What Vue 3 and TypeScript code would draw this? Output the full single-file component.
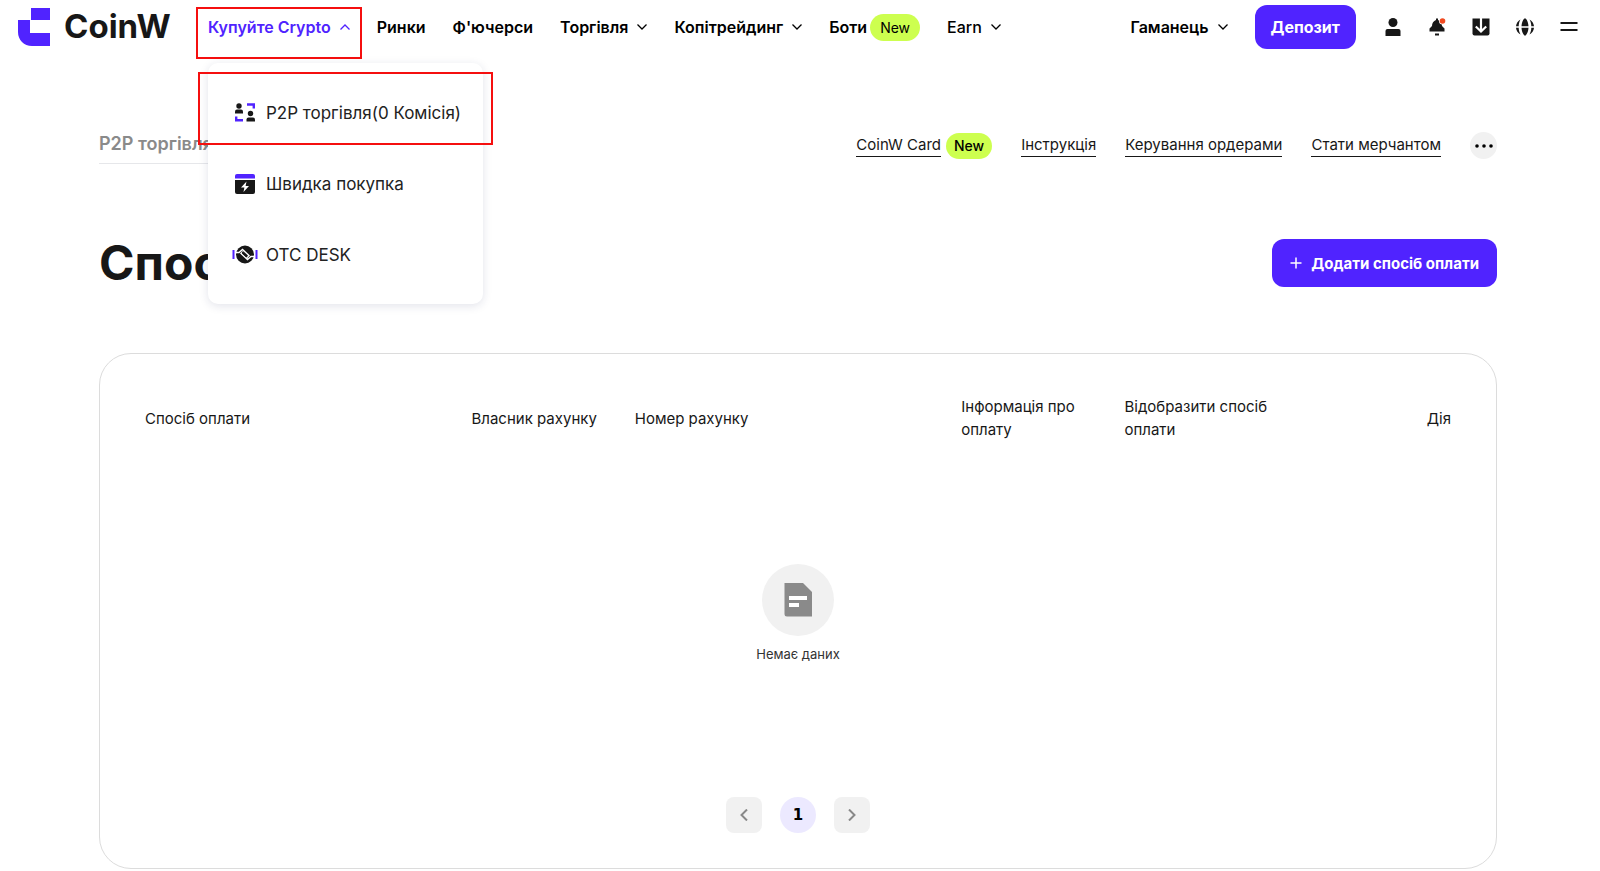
<script setup lang="ts">
interface NavItem {
  label: string
  arrow?: boolean
  badge?: string
  light?: boolean
}

const navItems: NavItem[] = [
  { label: 'Ринки' },
  { label: "Ф'ючерси" },
  { label: 'Торгівля', arrow: true },
  { label: 'Копітрейдинг', arrow: true },
  { label: 'Боти', badge: 'New' },
  { label: 'Earn', arrow: true, light: true },
]

const columns: string[] = [
  'Спосіб оплати',
  'Власник рахунку',
  'Номер рахунку',
  'Інформація про оплату',
  'Відобразити спосіб оплати',
  'Дія',
]
</script>

<template>
  <div class="page">
    <header class="header">
      <a class="logo" href="#">
        <svg class="logo-mark" viewBox="0 0 32 38" aria-hidden="true">
          <path d="M13 0H32V12H13Z" fill="#5023ff" />
          <path d="M0 12H12V25H32V38H14C6 38 0 32 0 24Z" fill="#5023ff" />
        </svg>
        <span>CoinW</span>
      </a>
      <nav class="nav">
        <div class="buy">
          <button class="nav-link active" type="button" aria-expanded="true">
            Купуйте Crypto
            <svg class="chevron" viewBox="0 0 10 6"><path d="M0.5 5.5 5 1 9.5 5.5" /></svg>
          </button>
          <div class="frame frame-nav"></div>
          <div class="menu">
            <a class="menu-item" href="#">
              <svg class="menu-icon" viewBox="0 0 26 22">
                <g fill="#171717">
                  <circle cx="7" cy="4" r="2.7" />
                  <path d="M3 11.500V9.500Q3 7.500 5 7.500H9Q11 7.500 11 9.500V11.500Z" />
                  <circle cx="18.500" cy="11.500" r="2.700" />
                  <path d="M14.500 19.500V17.500Q14.500 15.500 16.500 15.500H21Q23 15.500 23 17.500V19.500Z" />
                </g>
                <path d="M15 2.500H21.800V6.500M4.200 14.500V18.300H11" fill="none" stroke="#5023ff" stroke-width="2.400" />
              </svg>
              <span>P2P торгівля(0 Комісія)</span>
            </a>
            <a class="menu-item" href="#">
              <svg class="menu-icon" viewBox="0 0 26 22">
                <path d="M3 5.500V3Q3 1 5 1H21Q23 1 23 3V5.500Z" fill="#5023ff" />
                <path d="M3 7H23V19Q23 21 21 21H5Q3 21 3 19Z" fill="#171717" />
                <path d="M14.500 8.500 9 14.500H12.400L11.500 19 17 13H13.600Z" fill="#fff" />
              </svg>
              <span>Швидка покупка</span>
            </a>
            <a class="menu-item" href="#">
              <svg class="menu-icon" viewBox="0 0 26 22">
                <path d="M1.500 6V15M24.500 6V15" stroke="#5023ff" stroke-width="2" />
                <circle cx="13" cy="10.500" r="9" fill="#171717" />
                <path d="M4 8.500H7L10.500 5.500 17 11.500 14.500 14M22 12.500H19L15.500 15.500 9 9.500 11 7.500" fill="none" stroke="#fff" stroke-width="1.400" />
                <path d="M10.500 7.500 15.500 12.500 14.500 13.500 9.800 9Z" fill="#171717" />
              </svg>
              <span>OTC DESK</span>
            </a>
            <div class="frame frame-menu"></div>
          </div>
        </div>
        <a
          v-for="item in navItems"
          :key="item.label"
          class="nav-link"
          :class="{ light: item.light, badged: item.badge }"
          href="#"
        >
          {{ item.label }}
          <svg v-if="item.arrow" class="chevron" viewBox="0 0 10 6"><path d="M0.5 0.500 5 5 9.500 0.500" /></svg>
          <span v-if="item.badge" class="badge">{{ item.badge }}</span>
        </a>
      </nav>
      <div class="tools">
        <a class="nav-link" href="#">
          Гаманець
          <svg class="chevron" viewBox="0 0 10 6"><path d="M0.5 0.500 5 5 9.500 0.500" /></svg>
        </a>
        <button class="deposit" type="button">Депозит</button>
        <div class="icons">
          <button type="button" aria-label="Профіль">
            <svg viewBox="0 0 20 20" fill="#171717">
              <circle cx="10" cy="5.500" r="4.500" />
              <path d="M2.500 19V14Q2.500 12 4.500 12H15.500Q17.500 12 17.500 14V19Z" />
            </svg>
          </button>
          <button type="button" aria-label="Сповіщення">
            <svg viewBox="0 0 20 20" fill="#171717">
              <path d="M9 1.500H11V3C13.500 4 15 6 15 9L17.500 11.500V14.500H2.500V11.500L5 9C5 6 6.500 4 9 3Z" />
              <path d="M8 16.500H12V18.500H8Z" />
              <circle cx="15.500" cy="4" r="3.500" fill="#fff" />
              <circle cx="15.500" cy="4" r="2.800" fill="#f04a20" />
            </svg>
          </button>
          <button type="button" aria-label="Завантажити">
            <svg viewBox="0 0 20 20">
              <path d="M1.500 1.500H18.500V16.500Q18.500 18.500 16.500 18.500H3.500Q1.500 18.500 1.500 16.500Z" fill="#171717" />
              <path d="M10 0V14.500M4.800 9.500 10 14.500 15.200 9.500" fill="none" stroke="#fff" stroke-width="2.200" />
            </svg>
          </button>
          <button type="button" aria-label="Мова">
            <svg viewBox="0 0 20 20" fill="#171717">
              <path d="M9.300 1.500H10.700C12.500 3.500 13.300 6 13.500 9.200H6.500C6.700 6 7.500 3.500 9.300 1.500ZM6.500 10.800H13.500C13.300 14 12.500 16.500 10.700 18.500H9.300C7.500 16.500 6.700 14 6.500 10.800Z" />
              <path d="M5.500 2.500C4.300 4.500 3.700 7 3.700 9.200H1C1.200 6.400 3 3.800 5.500 2.500ZM14.500 2.500C15.700 4.500 16.300 7 16.300 9.200H19C18.800 6.400 17 3.800 14.500 2.500ZM5.500 17.500C4.300 15.500 3.700 13 3.700 10.800H1C1.200 13.600 3 16.200 5.500 17.500ZM14.500 17.500C15.700 15.500 16.300 13 16.300 10.800H19C18.800 13.600 17 16.200 14.500 17.500Z" />
            </svg>
          </button>
          <button type="button" aria-label="Меню">
            <svg viewBox="0 0 20 20"><path d="M1.500 6H18.500M1.500 13H18.500" stroke="#171717" stroke-width="2" /></svg>
          </button>
        </div>
      </div>
    </header>

    <main class="content">
      <div class="subbar">
        <a class="crumb" href="#">P2P торгівля</a>
        <div class="links">
          <span class="card-link"><a href="#">CoinW Card</a><span class="badge small">New</span></span>
          <a href="#">Інструкція</a>
          <a href="#">Керування ордерами</a>
          <a href="#">Стати мерчантом</a>
          <button class="more" type="button" aria-label="Більше">
            <svg viewBox="0 0 18 4"><circle cx="2" cy="2" r="1.800" /><circle cx="9" cy="2" r="1.800" /><circle cx="16" cy="2" r="1.800" /></svg>
          </button>
        </div>
      </div>

      <div class="title-row">
        <h1>Спосіб оплати</h1>
        <button class="add" type="button">
          <svg viewBox="0 0 12 12"><path d="M6 0.500V11.500M0.500 6H11.500" stroke="#fff" stroke-width="1.500" /></svg>
          Додати спосіб оплати
        </button>
      </div>

      <section class="card">
        <table>
          <thead>
            <tr>
              <th v-for="column in columns" :key="column" scope="col">{{ column }}</th>
            </tr>
          </thead>
          <tbody>
            <tr>
              <td colspan="6">
                <div class="empty">
                  <svg viewBox="0 0 72 72">
                    <circle cx="36" cy="36" r="36" fill="#f1f1f1" />
                    <path d="M22.500 19H41L50 28V52.500H25Q22.500 52.500 22.500 50Z" fill="#8a8a8a" />
                    <path d="M27 32H45V36H27ZM27 39H37V43H27Z" fill="#fff" />
                  </svg>
                  <span>Немає даних</span>
                </div>
              </td>
            </tr>
          </tbody>
        </table>
        <div class="pager">
          <button type="button" aria-label="Попередня сторінка">
            <svg viewBox="0 0 8 12"><path d="M7 0.500 1.500 6 7 11.500" /></svg>
          </button>
          <button class="current" type="button" aria-current="page">1</button>
          <button type="button" aria-label="Наступна сторінка">
            <svg viewBox="0 0 8 12"><path d="M1 0.500 6.500 6 1 11.500" /></svg>
          </button>
        </div>
      </section>
    </main>
  </div>
</template>

<style>
body {
  background: #fff;
}
</style>

<style scoped>
.page,
.page * {
  box-sizing: border-box;
}
.page {
  font-family: Inter, "Noto Sans", sans-serif;
  font-size: 16px;
  color: #171717;
}
button {
  padding: 0;
  border: 0;
  background: none;
  font: inherit;
  color: inherit;
}
a {
  color: inherit;
  text-decoration: none;
}
svg {
  flex-shrink: 0;
}
.header {
  display: flex;
  align-items: center;
  height: 54px;
  padding: 0 21px 0 18px;
}
.logo {
  display: flex;
  align-items: center;
  gap: 14px;
  width: 190px;
  font-size: 33px;
  font-weight: 700;
}
.logo span {
  padding-bottom: 2px;
}
.logo-mark {
  width: 32px;
  height: 38px;
}
.nav {
  display: flex;
  align-items: center;
  gap: 27px;
}
.nav-link {
  display: flex;
  align-items: center;
  gap: 9px;
  font-weight: 600;
  line-height: 24px;
  color: #000;
  white-space: nowrap;
}
.nav-link.light {
  font-weight: 500;
}
.nav-link.badged {
  gap: 3px;
}
.nav-link.active {
  color: #5023ff;
}
.chevron {
  width: 10px;
  height: 6px;
  fill: none;
  stroke: currentColor;
  stroke-width: 1.3;
}
.badge {
  padding: 0 10px;
  border-radius: 14px;
  background: #cdff4f;
  font-size: 14px;
  font-weight: 400;
  line-height: 27px;
  color: #000;
}
.badge.small {
  padding: 0 8px;
  font-weight: 500;
  line-height: 26px;
}
.buy {
  position: relative;
}
.frame {
  position: absolute;
  border: 2px solid #f50f0f;
  pointer-events: none;
}
.frame-nav {
  inset: -8px -12px -20px;
}
.menu {
  position: absolute;
  z-index: 2;
  top: 48px;
  left: 0;
  width: 275px;
  padding: 14px 24px;
  border-radius: 10px;
  background: #fff;
  box-shadow: 0 2px 10px rgba(30, 40, 90, 0.13);
}
.frame-menu {
  top: 9px;
  left: -10px;
  width: 295px;
  height: 73px;
}
.menu-item {
  display: flex;
  align-items: center;
  gap: 8px;
  height: 71px;
  font-size: 17px;
  color: #222;
  white-space: nowrap;
}
.menu-icon {
  width: 26px;
  height: 22px;
}
.tools {
  display: flex;
  align-items: center;
  gap: 27px;
  margin-left: auto;
}
.deposit {
  height: 44px;
  padding: 0 16px;
  border-radius: 12px;
  background: #5023ff;
  font-weight: 700;
  color: #fff;
}
.icons {
  display: flex;
  gap: 24px;
}
.icons button,
.icons svg {
  display: block;
  width: 20px;
  height: 20px;
}
.content {
  padding: 74px 103px 2px 99px;
}
.subbar {
  display: flex;
  align-items: flex-start;
  justify-content: space-between;
}
.crumb {
  width: 170px;
  padding: 4px 0 7px;
  border-bottom: 1px solid #e6e7ea;
  font-size: 18px;
  font-weight: 600;
  line-height: 24px;
  color: #8a8a8a;
}
.links {
  display: flex;
  align-items: center;
  gap: 29px;
  padding-top: 4px;
  font-size: 15px;
  line-height: 22px;
}
.links a {
  border-bottom: 1px solid #171717;
}
.card-link {
  display: flex;
  align-items: center;
  gap: 5px;
}
.more {
  display: flex;
  align-items: center;
  justify-content: center;
  width: 27px;
  height: 27px;
  border-radius: 50%;
  background: #f1f1f1;
}
.more svg {
  width: 18px;
  height: 4px;
}
.title-row {
  display: flex;
  align-items: center;
  justify-content: space-between;
  padding: 75px 0 66px;
}
h1 {
  margin: 0;
  font-size: 48px;
  font-weight: 700;
  line-height: 48px;
}
.add {
  display: flex;
  align-items: center;
  gap: 9px;
  height: 48px;
  padding: 0 18px;
  border-radius: 12px;
  background: #5023ff;
  font-size: 15px;
  font-weight: 700;
  color: #fff;
}
.add svg {
  width: 12px;
  height: 12px;
}
.card {
  padding: 39px 45px 35px;
  border: 1px solid #dcdcdc;
  border-radius: 32px;
}
table {
  width: 100%;
  border-collapse: collapse;
  table-layout: fixed;
}
th {
  width: 12.5%;
  height: 50px;
  padding: 0 8px 0 0;
  font-size: 15px;
  font-weight: 400;
  line-height: 23px;
  text-align: left;
}
th:first-child,
th:nth-child(3) {
  width: 25%;
}
th:last-child {
  padding: 0;
  text-align: right;
}
td {
  padding: 0;
}
.empty {
  display: flex;
  flex-direction: column;
  align-items: center;
  gap: 8px;
  padding: 121px 0 133px;
  font-size: 13px;
  line-height: 20px;
  color: #333;
}
.empty svg {
  width: 72px;
  height: 72px;
}
.pager {
  display: flex;
  justify-content: center;
  gap: 18px;
}
.pager button {
  display: flex;
  align-items: center;
  justify-content: center;
  width: 36px;
  height: 36px;
  border-radius: 8px;
  background: #f1f1f1;
}
.pager .current {
  border-radius: 50%;
  background: #ece9ff;
  font-family: "DejaVu Sans", sans-serif;
  font-size: 15px;
  font-weight: 700;
  color: #000;
}
.pager svg {
  width: 8px;
  height: 12px;
  fill: none;
  stroke: #888;
  stroke-width: 2;
}
</style>
